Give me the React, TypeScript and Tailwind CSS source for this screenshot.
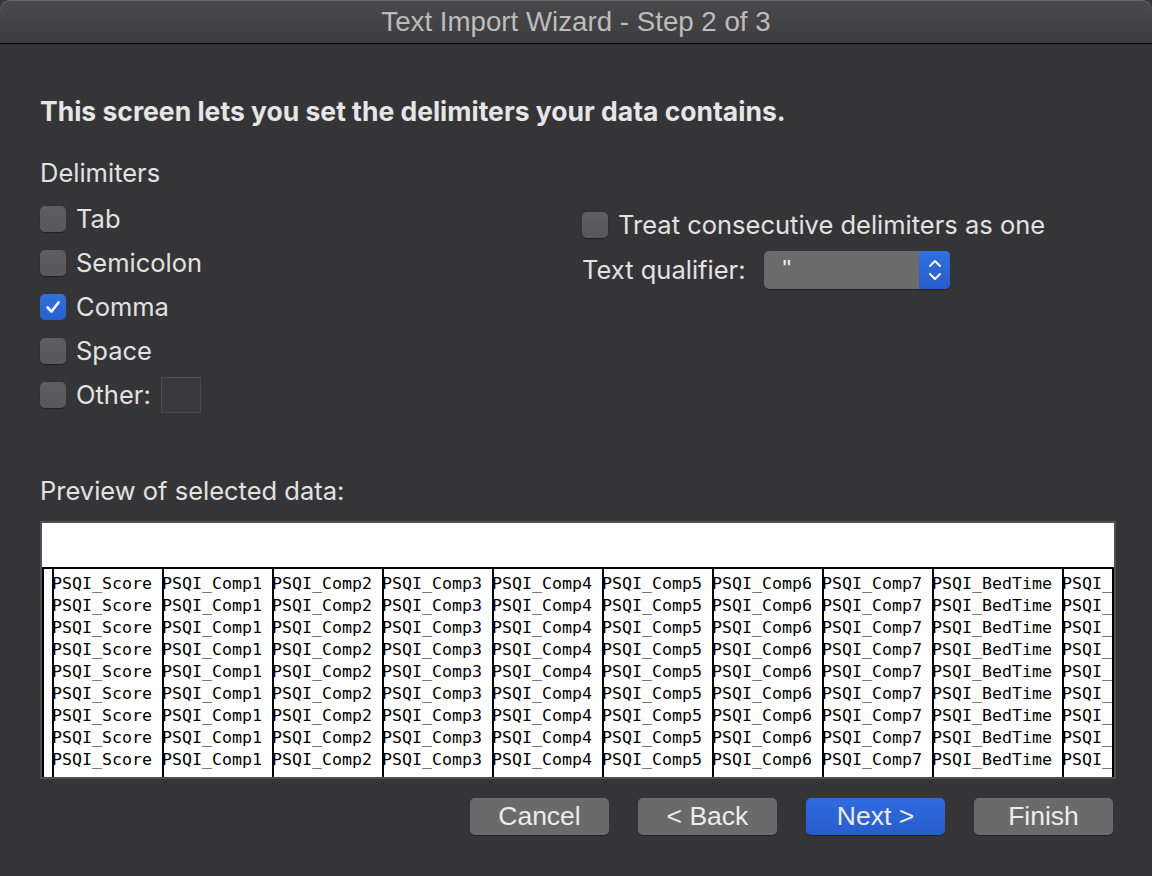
import React from "react";

const SANS = "font-['Inter','Liberation_Sans',sans-serif]";

const columns = [
  "PSQI_Score",
  "PSQI_Comp1",
  "PSQI_Comp2",
  "PSQI_Comp3",
  "PSQI_Comp4",
  "PSQI_Comp5",
  "PSQI_Comp6",
  "PSQI_Comp7",
  "PSQI_BedTime",
  "PSQI_",
];

const widths = ["w-[110px]", "w-[110px]", "w-[110px]", "w-[110px]", "w-[110px]", "w-[110px]", "w-[110px]", "w-[110px]", "w-[130px]", "w-[50px]"];

function Checkbox({ checked = false }: { checked?: boolean }) {
  if (checked) {
    return (
      <span className="flex h-[26px] w-[26px] shrink-0 items-center justify-center rounded-[5px] bg-gradient-to-b from-[#3070e0] to-[#285fcf]">
        <svg width="18" height="18" viewBox="0 0 18 18" fill="none">
          <path d="M3.5 9.5 L7.5 13.5 L14.5 4.5" stroke="white" strokeWidth="2.6" strokeLinecap="round" strokeLinejoin="round" />
        </svg>
      </span>
    );
  }
  return <span className="h-[26px] w-[26px] shrink-0 rounded-[5px] bg-gradient-to-b from-[#5f5f61] to-[#58585a] shadow-[0_0.5px_1px_rgba(0,0,0,0.4)]" />;
}

function CheckRow({ label, checked, children }: { label: string; checked?: boolean; children?: React.ReactNode }) {
  return (
    <div className="flex h-[44px] items-center gap-[10px]">
      <Checkbox checked={checked} />
      <span className="text-[25.5px] text-[#e2e2e2]">{label}</span>
      {children}
    </div>
  );
}

function Button({ label, primary = false }: { label: string; primary?: boolean }) {
  return (
    <button
      className={
        "flex h-[37px] w-[139px] items-center justify-center rounded-[5px] text-[26.5px] text-[#ececec] font-['Liberation_Sans',sans-serif] shadow-[0_1px_1px_rgba(0,0,0,0.35)] " +
        (primary ? "bg-gradient-to-b from-[#2f6be0] to-[#285ccc]" : "bg-[#6a6a6a]")
      }
    >
      {label}
    </button>
  );
}

export default function App() {
  const rows = Array.from({ length: 9 });
  return (
    <div className={"h-[876px] w-[1152px] overflow-hidden bg-[#353537] " + SANS}>
      <div className="flex h-[44px] items-center justify-center rounded-t-[10px] border-b border-black bg-gradient-to-b from-[#49494b] to-[#3e3e40] shadow-[inset_0_1px_0_#6a6a6c]">
        <span className="text-[27.7px] text-[#bcbcbc] font-['Liberation_Sans',sans-serif]">Text Import Wizard - Step 2 of 3</span>
      </div>

      <div className="pl-[40px]">
        <div className="mt-[53px] h-[28px] text-[26.5px] leading-[28px] font-bold text-[#e6e6e6]">
          This screen lets you set the delimiters your data contains.
        </div>
        <div className="mt-[34px] h-[28px] text-[25.5px] leading-[28px] text-[#e2e2e2]">Delimiters</div>

        <div className="mt-[10px] flex">
          <div className="w-[542px]">
            <CheckRow label="Tab" />
            <CheckRow label="Semicolon" />
            <CheckRow label="Comma" checked />
            <CheckRow label="Space" />
            <CheckRow label="Other:">
              <span className="h-[36px] w-[40px] border border-[#4c4c4e] bg-[#3a3a3c]" />
            </CheckRow>
          </div>
          <div className="pt-[6px]">
            <CheckRow label="Treat consecutive delimiters as one" />
            <div className="mt-[3px] flex h-[40px] items-center">
              <span className="text-[25.5px] text-[#e2e2e2]">Text qualifier:</span>
              <div className="ml-[19px] flex h-[38px] w-[186px] overflow-hidden rounded-[5px] bg-[#6b6b6b] shadow-[0_1px_1px_rgba(0,0,0,0.35)]">
                <span className="flex-1 pl-[18px] pt-[3px] text-[24px] leading-[30px] text-[#f0f0f0] font-['Liberation_Sans',sans-serif]">"</span>
                <span className="flex w-[31px] items-center justify-center bg-gradient-to-b from-[#3070e0] to-[#285ccc]">
                  <svg width="16" height="28" viewBox="0 0 16 28" fill="none">
                    <path d="M3 10 L8 5 L13 10" stroke="white" strokeWidth="2" strokeLinecap="round" strokeLinejoin="round" />
                    <path d="M3 18 L8 23 L13 18" stroke="white" strokeWidth="2" strokeLinecap="round" strokeLinejoin="round" />
                  </svg>
                </span>
              </div>
            </div>
          </div>
        </div>

        <div className="mt-[60px] h-[28px] text-[25.5px] leading-[28px] text-[#e2e2e2]">Preview of selected data:</div>

        <div className="mt-[16px] h-[258px] w-[1076px] border-2 border-[#505052] bg-white">
          <div className="h-[44px]" />
          <div className="flex h-[210px] border-t-2 border-l-2 border-r-2 border-black font-['DejaVu_Sans_Mono',monospace] text-[16.6px] leading-[22px] text-black">
            <div className="w-[8px] shrink-0" />
            {columns.map((c, i) => (
              <div key={i} className={"shrink-0 whitespace-nowrap border-l-2 border-black pt-[4px] " + widths[i]}>
                {rows.map((_, r) => (
                  <div key={r} className="-ml-[2px] h-[22px]">{c}</div>
                ))}
              </div>
            ))}
          </div>
        </div>

        <div className="mt-[19px] flex w-[1073px] justify-end gap-[29px]">
          <Button label="Cancel" />
          <Button label="< Back" />
          <Button label="Next >" primary />
          <Button label="Finish" />
        </div>
      </div>
    </div>
  );
}
